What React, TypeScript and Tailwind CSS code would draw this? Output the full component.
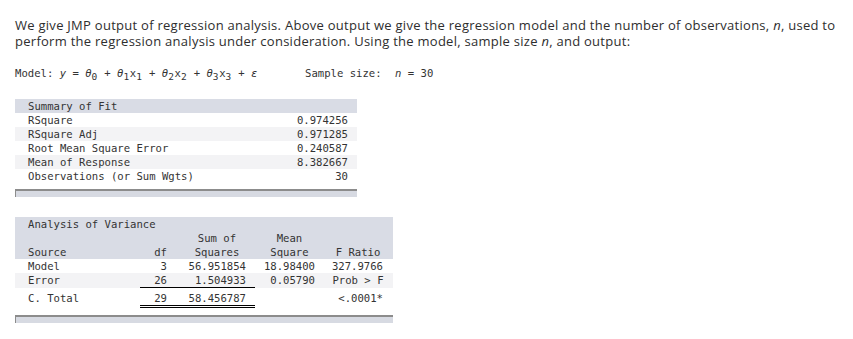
import React from "react";

const mono = "font-['DejaVu_Sans_Mono',monospace] text-[10.6px] leading-[14px] text-[#333]";

function Sub({ c }: { c: string }) {
  return <span className="inline-block w-[6.38px] relative top-[3px] text-[9.5px] leading-[10px]">{c}</span>;
}

function Bar() {
  return <div className="h-[8px] border-t-2 border-l border-[#8c8c8c] bg-[#d7dae2]" />;
}

export default function App() {
  const fit: [string, string][] = [
    ["RSquare", "0.974256"],
    ["RSquare Adj", "0.971285"],
    ["Root Mean Square Error", "0.240587"],
    ["Mean of Response", "8.382667"],
    ["Observations (or Sum Wgts)", "30"],
  ];
  const grid = "grid grid-cols-[112px_27px_88px_69px_68px]";
  return (
    <div className="w-[853px] h-[339px] bg-white pl-[15px] pt-[17px]">
      <div className="font-['Open_Sans',sans-serif] text-[13px] leading-[16px] tracking-[0.27px] text-[#2e2e2e] whitespace-nowrap">
        <div className="h-[16px]">
          We give JMP output of regression analysis. Above output we give the regression model and the number of
          observations, <i>n</i>, used to
        </div>
        <div className="h-[16px]">
          perform the regression analysis under consideration. Using the model, sample size <i>n</i>, and output:
        </div>
      </div>

      <div className={`${mono} text-[#4a4a4a] mt-[17px] flex whitespace-pre`}>
        <span className="w-[290px]">
          Model: <i>y</i> = <i>θ</i>
          <Sub c="0" /> + <i>θ</i>
          <Sub c="1" />x<Sub c="1" /> + <i>θ</i>
          <Sub c="2" />x<Sub c="2" /> + <i>θ</i>
          <Sub c="3" />x<Sub c="3" /> + <i>ε</i>
        </span>
        <span className="w-[90px]">Sample size:</span>
        <span>
          <i>n</i> = 30
        </span>
      </div>

      <div className={`${mono} w-[342px] mt-[19px]`}>
        <div className="h-[14px] bg-[#d9dce5] pl-[13px]">Summary of Fit</div>
        {fit.map(([k, v], i) => (
          <div
            key={k}
            className={`h-[14px] flex justify-between pl-[13px] pr-[9px] ${i % 2 === 1 ? "bg-[#f3f3f5]" : "bg-white"}`}
          >
            <span>{k}</span>
            <span>{v}</span>
          </div>
        ))}
        <div className="mt-[6px]">
          <Bar />
        </div>
      </div>

      <div className={`${mono} w-[378px] mt-[20px]`}>
        <div className="bg-[#d9dce5] pl-[13px]">
          <div className="h-[14px]">Analysis of Variance</div>
          <div className={grid}>
            <div className="h-[14px]" />
            <div />
            <div className="text-center pl-[12px]">Sum of</div>
            <div className="text-center">Mean</div>
            <div />
            <div className="h-[14px]">Source</div>
            <div className="text-right">df</div>
            <div className="text-center pl-[12px]">Squares</div>
            <div className="text-center">Square</div>
            <div className="text-center">F Ratio</div>
          </div>
        </div>
        <div className={`${grid} pl-[13px] bg-white`}>
          <div className="h-[14px]">Model</div>
          <div className="text-right">3</div>
          <div className="text-right pr-[9px]">56.951854</div>
          <div className="text-right pr-[9px]">18.98400</div>
          <div className="text-right pr-[9px]">327.9766</div>
        </div>
        <div className={`${grid} pl-[13px] bg-[#f3f3f5]`}>
          <div className="h-[15px]">Error</div>
          <div className="h-[15px] text-right border-b border-black">26</div>
          <div className="h-[15px] text-right pr-[9px] border-b border-black">1.504933</div>
          <div className="text-right pr-[9px]">0.05790</div>
          <div className="text-center">Prob &gt; F</div>
        </div>
        <div className={`${grid} pl-[13px] bg-white`}>
          <div className="h-[20px] pt-[3px]">C. Total</div>
          <div className="h-[20px] pt-[3px] text-right border-b-[3px] border-double border-black">29</div>
          <div className="h-[20px] pt-[3px] text-right pr-[9px] border-b-[3px] border-double border-black">
            58.456787
          </div>
          <div className="h-[20px]" />
          <div className="h-[20px] pt-[3px] text-right pr-[9px]">&lt;.0001*</div>
        </div>
        <div className="mt-[7px]">
          <Bar />
        </div>
      </div>
    </div>
  );
}
